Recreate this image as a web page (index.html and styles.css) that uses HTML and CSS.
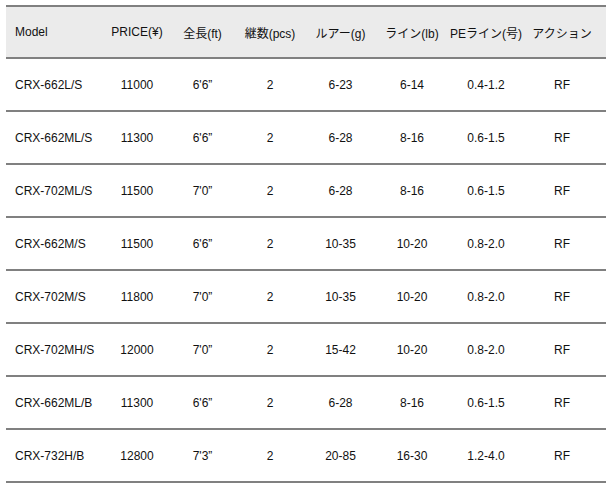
FILE: index.html
```html
<!DOCTYPE html>
<html lang="ja">
<head>
<meta charset="utf-8">
<title>CRX Spec</title>
<link rel="stylesheet" href="styles.css">
</head>
<body>
<div class="spec">
  <div class="row head">
    <div class="cell model">Model</div>
    <div class="cell">PRICE(¥)</div>
    <div class="cell">全長(ft)</div>
    <div class="cell">継数(pcs)</div>
    <div class="cell">ルアー(g)</div>
    <div class="cell">ライン(lb)</div>
    <div class="cell">PEライン(号)</div>
    <div class="cell">アクション</div>
  </div>
  <div class="row">
    <div class="cell model">CRX-662L/S</div><div class="cell">11000</div><div class="cell">6'6”</div><div class="cell">2</div><div class="cell">6-23</div><div class="cell">6-14</div><div class="cell">0.4-1.2</div><div class="cell">RF</div>
  </div>
  <div class="row">
    <div class="cell model">CRX-662ML/S</div><div class="cell">11300</div><div class="cell">6'6”</div><div class="cell">2</div><div class="cell">6-28</div><div class="cell">8-16</div><div class="cell">0.6-1.5</div><div class="cell">RF</div>
  </div>
  <div class="row">
    <div class="cell model">CRX-702ML/S</div><div class="cell">11500</div><div class="cell">7'0”</div><div class="cell">2</div><div class="cell">6-28</div><div class="cell">8-16</div><div class="cell">0.6-1.5</div><div class="cell">RF</div>
  </div>
  <div class="row">
    <div class="cell model">CRX-662M/S</div><div class="cell">11500</div><div class="cell">6'6”</div><div class="cell">2</div><div class="cell">10-35</div><div class="cell">10-20</div><div class="cell">0.8-2.0</div><div class="cell">RF</div>
  </div>
  <div class="row">
    <div class="cell model">CRX-702M/S</div><div class="cell">11800</div><div class="cell">7'0”</div><div class="cell">2</div><div class="cell">10-35</div><div class="cell">10-20</div><div class="cell">0.8-2.0</div><div class="cell">RF</div>
  </div>
  <div class="row">
    <div class="cell model">CRX-702MH/S</div><div class="cell">12000</div><div class="cell">7'0”</div><div class="cell">2</div><div class="cell">15-42</div><div class="cell">10-20</div><div class="cell">0.8-2.0</div><div class="cell">RF</div>
  </div>
  <div class="row">
    <div class="cell model">CRX-662ML/B</div><div class="cell">11300</div><div class="cell">6'6”</div><div class="cell">2</div><div class="cell">6-28</div><div class="cell">8-16</div><div class="cell">0.6-1.5</div><div class="cell">RF</div>
  </div>
  <div class="row">
    <div class="cell model">CRX-732H/B</div><div class="cell">12800</div><div class="cell">7'3”</div><div class="cell">2</div><div class="cell">20-85</div><div class="cell">16-30</div><div class="cell">1.2-4.0</div><div class="cell">RF</div>
  </div>
</div>
</body>
</html>
```
FILE: styles.css
```css
html, body {
  margin: 0;
  padding: 0;
  background: #fff;
}
body {
  padding: 5px 0 0 6px;
  font-family: "Liberation Sans", "Noto Sans CJK JP", sans-serif;
  font-size: 12px;
  color: #111;
  overflow: hidden;
}
.spec {
  border-top: 2px solid #808080;
}
.row {
  display: grid;
  grid-template-columns: 98px 66px 65px 70px 71px 72px 76px 76px;
  height: 51px;
  border-bottom: 2px solid #808080;
}
.row.head {
  height: 50px;
  background: #ebebeb;
}
.cell {
  display: flex;
  align-items: center;
  justify-content: center;
  white-space: nowrap;
}
.cell.model {
  justify-content: flex-start;
  padding-left: 9px;
}
```
